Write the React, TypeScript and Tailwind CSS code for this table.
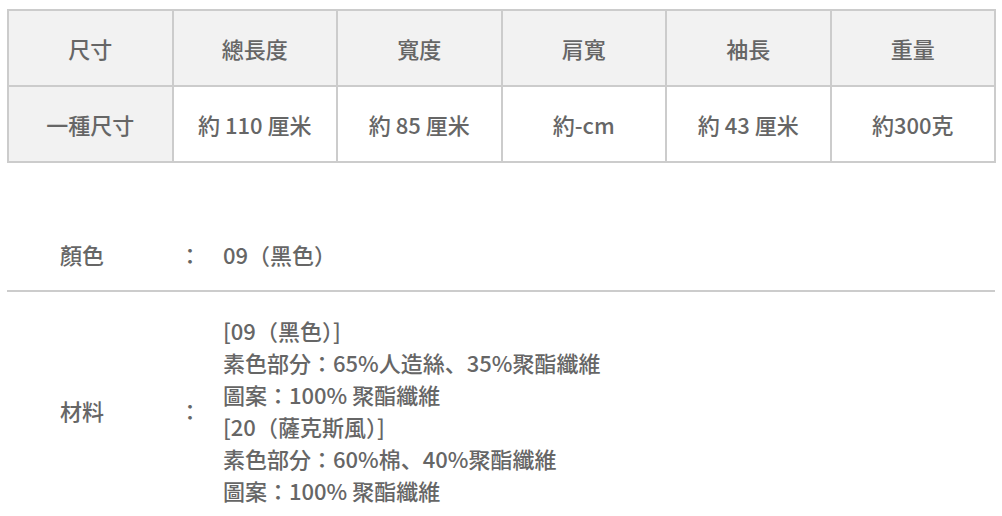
import React from 'react';

const heads = ['尺寸', '總長度', '寬度', '肩寬', '袖長', '重量'];
const cells = ['一種尺寸', '約 110 厘米', '約 85 厘米', '約-cm', '約 43 厘米', '約300克'];

const materials = [
  '[09（黑色）]',
  '素色部分：65%人造絲、35%聚酯纖維',
  '圖案：100% 聚酯纖維',
  '[20（薩克斯風）]',
  '素色部分：60%棉、40%聚酯纖維',
  '圖案：100% 聚酯纖維',
];

export default function App() {
  return (
    <div className="w-[1002px] h-[516px] bg-white overflow-hidden font-['Noto_Sans_CJK_JP','Noto_Sans_CJK_TC',sans-serif] text-[#666]">
      {/* Size table */}
      <div className="pt-[9px] pl-[7px]">
        <table className="w-[989px] table-fixed border-collapse border-2 border-[#cccccc] text-[22px] font-medium">
          <tbody>
            <tr className="h-[76px] bg-[#f2f2f2]">
              {heads.map((h) => (
                <td key={h} className="border-2 border-[#cccccc] text-center align-middle">{h}</td>
              ))}
            </tr>
            <tr className="h-[76px]">
              {cells.map((c, i) => (
                <td
                  key={c}
                  className={`border-2 border-[#cccccc] text-center align-middle ${i === 0 ? 'bg-[#f2f2f2]' : 'bg-white'}`}
                >
                  {c}
                </td>
              ))}
            </tr>
          </tbody>
        </table>
      </div>

      {/* Details */}
      <div className="mt-[59px] mx-[7px] text-[22px] font-medium">
        <div className="flex items-center h-[70px] pb-[3px] border-b-2 border-[#cccccc]">
          <div className="w-[172px] pl-[53px]">顏色</div>
          <div className="w-[44px]">：</div>
          <div>09（黑色）</div>
        </div>
        <div className="flex items-center pt-[22px]">
          <div className="w-[172px] pl-[53px]">材料</div>
          <div className="w-[44px]">：</div>
          <div className="flex flex-col leading-[32px]">
            {materials.map((m, i) => (
              <div key={i}>{m}</div>
            ))}
          </div>
        </div>
      </div>
    </div>
  );
}
